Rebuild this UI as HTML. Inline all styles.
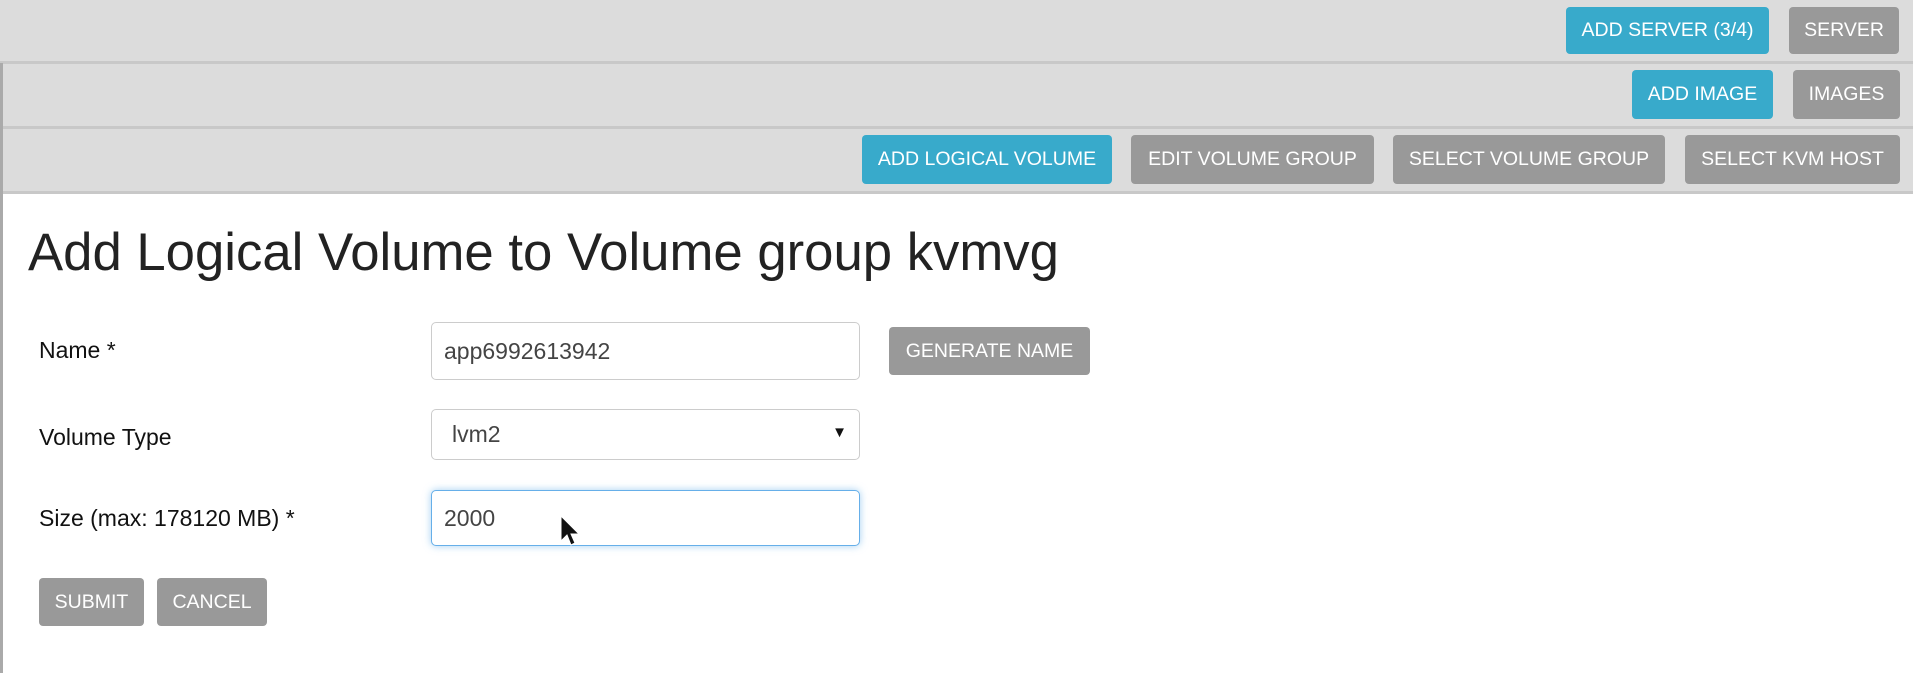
<!DOCTYPE html>
<html><head><meta charset="utf-8"><style>
*{box-sizing:border-box;margin:0;padding:0}
body{width:1920px;height:673px;background:#fff;position:relative;overflow:hidden;font-family:"Liberation Sans",Arial,sans-serif;color:#222}
.bar{position:absolute;left:0;width:1913px;background:#dcdcdc;border-bottom:3px solid #c8c8c8}
.btn{position:absolute;color:#fff;font-size:19.5px;border-radius:4px;display:flex;align-items:center;justify-content:center;white-space:nowrap;text-transform:uppercase}
.c{background:#38aacb}.g{background:#999}
.lbl{position:absolute;left:39px;font-size:23px;color:#111}
.inp{position:absolute;left:431px;width:429px;border:1.5px solid #ccc;border-radius:5px;font-size:23px;color:#444;padding-left:12px;display:flex;align-items:center;background:#fff}
</style></head><body>
<div class="bar" style="top:0;height:64px"></div>
<div class="bar" style="top:64px;height:65px"></div>
<div class="bar" style="top:129px;height:65px"></div>
<div style="position:absolute;left:0;top:63px;width:3px;height:610px;background:#aaa"></div>

<div class="btn c" style="left:1566px;top:7px;width:203px;height:47px">Add Server (3/4)</div>
<div class="btn g" style="left:1789px;top:7px;width:110px;height:47px">Server</div>
<div class="btn c" style="left:1632px;top:70px;width:141px;height:49px">Add Image</div>
<div class="btn g" style="left:1793px;top:70px;width:107px;height:49px">Images</div>
<div class="btn c" style="left:862px;top:135px;width:250px;height:49px">Add Logical Volume</div>
<div class="btn g" style="left:1131px;top:135px;width:243px;height:49px">Edit Volume Group</div>
<div class="btn g" style="left:1393px;top:135px;width:272px;height:49px">Select Volume Group</div>
<div class="btn g" style="left:1685px;top:135px;width:215px;height:49px">Select KVM Host</div>

<div style="position:absolute;left:28px;top:222px;font-size:52.7px;color:#222;white-space:nowrap">Add Logical Volume to Volume group kvmvg</div>

<div class="lbl" style="top:337px">Name *</div>
<div class="inp" style="top:322px;height:58px">app6992613942</div>
<div class="btn g" style="left:889px;top:327px;width:201px;height:48px">Generate Name</div>

<div class="lbl" style="top:424px">Volume Type</div>
<div class="inp" style="top:409px;height:51px;padding-left:20px">lvm2<span style="position:absolute;right:12px;top:14px;font-size:15px;color:#111">▼</span></div>

<div class="lbl" style="top:505px">Size (max: 178120 MB) *</div>
<div class="inp" style="top:490px;height:56px;border-color:#66afe9;box-shadow:0 0 8px rgba(102,175,233,.6)">2000</div>
<svg style="position:absolute;left:559px;top:514px" width="22" height="40" viewBox="0 0 22 40"><path d="M2 2 L2 27 L8 21 L12 31 L16 29 L12 20 L20 20 Z" fill="#111" stroke="#fff" stroke-width="1"/></svg>

<div class="btn g" style="left:39px;top:578px;width:105px;height:48px">Submit</div>
<div class="btn g" style="left:157px;top:578px;width:110px;height:48px">Cancel</div>
</body></html>
